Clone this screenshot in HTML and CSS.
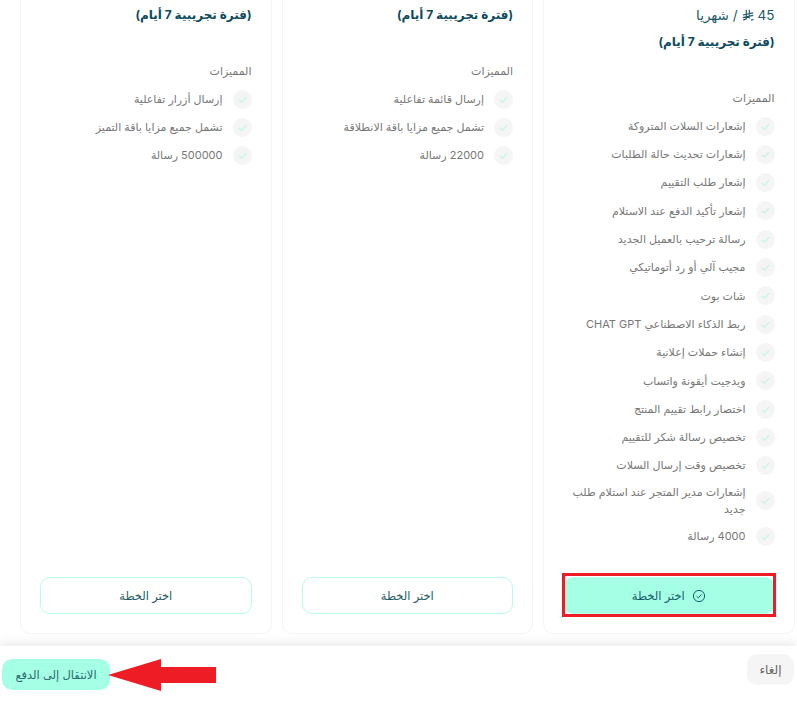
FILE: index.html
```html
<!DOCTYPE html>
<html lang="ar" dir="rtl">
<head>
<meta charset="utf-8">
<title>الخطط</title>
<link rel="stylesheet" href="styles.css">
</head>
<body>
<main class="plans">
  <section class="card">
    <div class="price">45 <svg class="riyal" viewBox="0 0 14 14"><path d="M5 1v10.5L1.5 13M8.5 1v10M1 7l12-2.5M1 10l12-2.5M10.5 13l3-.8" fill="none" stroke="currentColor" stroke-width="1.4"/></svg> / شهريا</div>
    <h2 class="trial">(فترة تجريبية 7 أيام)</h2>
    <h3 class="features-title">المميزات</h3>
    <ul class="features">
      <li><span class="tick"><svg viewBox="0 0 12 12"><path d="M2 6.5l2.8 2.6L10 3.5"/></svg></span><span>إشعارات السلات المتروكة</span></li>
      <li><span class="tick"><svg viewBox="0 0 12 12"><path d="M2 6.5l2.8 2.6L10 3.5"/></svg></span><span>إشعارات تحديث حالة الطلبات</span></li>
      <li><span class="tick"><svg viewBox="0 0 12 12"><path d="M2 6.5l2.8 2.6L10 3.5"/></svg></span><span>إشعار طلب التقييم</span></li>
      <li><span class="tick"><svg viewBox="0 0 12 12"><path d="M2 6.5l2.8 2.6L10 3.5"/></svg></span><span>إشعار تأكيد الدفع عند الاستلام</span></li>
      <li><span class="tick"><svg viewBox="0 0 12 12"><path d="M2 6.5l2.8 2.6L10 3.5"/></svg></span><span>رسالة ترحيب بالعميل الجديد</span></li>
      <li><span class="tick"><svg viewBox="0 0 12 12"><path d="M2 6.5l2.8 2.6L10 3.5"/></svg></span><span>مجيب آلي أو رد أتوماتيكي</span></li>
      <li><span class="tick"><svg viewBox="0 0 12 12"><path d="M2 6.5l2.8 2.6L10 3.5"/></svg></span><span>شات بوت</span></li>
      <li><span class="tick"><svg viewBox="0 0 12 12"><path d="M2 6.5l2.8 2.6L10 3.5"/></svg></span><span>ربط الذكاء الاصطناعي CHAT GPT</span></li>
      <li><span class="tick"><svg viewBox="0 0 12 12"><path d="M2 6.5l2.8 2.6L10 3.5"/></svg></span><span>إنشاء حملات إعلانية</span></li>
      <li><span class="tick"><svg viewBox="0 0 12 12"><path d="M2 6.5l2.8 2.6L10 3.5"/></svg></span><span>ويدجيت أيقونة واتساب</span></li>
      <li><span class="tick"><svg viewBox="0 0 12 12"><path d="M2 6.5l2.8 2.6L10 3.5"/></svg></span><span>اختصار رابط تقييم المنتج</span></li>
      <li><span class="tick"><svg viewBox="0 0 12 12"><path d="M2 6.5l2.8 2.6L10 3.5"/></svg></span><span>تخصيص رسالة شكر للتقييم</span></li>
      <li><span class="tick"><svg viewBox="0 0 12 12"><path d="M2 6.5l2.8 2.6L10 3.5"/></svg></span><span>تخصيص وقت إرسال السلات</span></li>
      <li><span class="tick"><svg viewBox="0 0 12 12"><path d="M2 6.5l2.8 2.6L10 3.5"/></svg></span><span>إشعارات مدير المتجر عند استلام طلب جديد</span></li>
      <li><span class="tick"><svg viewBox="0 0 12 12"><path d="M2 6.5l2.8 2.6L10 3.5"/></svg></span><span>4000 رسالة</span></li>
    </ul>
    <div class="choose-wrap selected-wrap">
      <button class="choose selected"><svg class="ok" viewBox="0 0 14 14"><circle cx="7" cy="7" r="5.6"/><path d="M4.6 7.2l1.7 1.6 3.2-3.4"/></svg>اختر الخطة</button>
    </div>
  </section>

  <section class="card">
    <h2 class="trial">(فترة تجريبية 7 أيام)</h2>
    <h3 class="features-title">المميزات</h3>
    <ul class="features">
      <li><span class="tick"><svg viewBox="0 0 12 12"><path d="M2 6.5l2.8 2.6L10 3.5"/></svg></span><span>إرسال قائمة تفاعلية</span></li>
      <li><span class="tick"><svg viewBox="0 0 12 12"><path d="M2 6.5l2.8 2.6L10 3.5"/></svg></span><span>تشمل جميع مزايا باقة الانطلاقة</span></li>
      <li><span class="tick"><svg viewBox="0 0 12 12"><path d="M2 6.5l2.8 2.6L10 3.5"/></svg></span><span>22000 رسالة</span></li>
    </ul>
    <div class="choose-wrap"><button class="choose">اختر الخطة</button></div>
  </section>

  <section class="card">
    <h2 class="trial">(فترة تجريبية 7 أيام)</h2>
    <h3 class="features-title">المميزات</h3>
    <ul class="features">
      <li><span class="tick"><svg viewBox="0 0 12 12"><path d="M2 6.5l2.8 2.6L10 3.5"/></svg></span><span>إرسال أزرار تفاعلية</span></li>
      <li><span class="tick"><svg viewBox="0 0 12 12"><path d="M2 6.5l2.8 2.6L10 3.5"/></svg></span><span>تشمل جميع مزايا باقة التميز</span></li>
      <li><span class="tick"><svg viewBox="0 0 12 12"><path d="M2 6.5l2.8 2.6L10 3.5"/></svg></span><span>500000 رسالة</span></li>
    </ul>
    <div class="choose-wrap"><button class="choose">اختر الخطة</button></div>
  </section>
</main>

<footer class="bar">
  <button class="cancel">إلغاء</button>
  <button class="go">الانتقال إلى الدفع</button>
  <svg class="arrow" viewBox="0 0 108 32"><path d="M0 16L53 0V8H108V24H53V32Z"/></svg>
</footer>
</body>
</html>
```
FILE: styles.css
```css
* { box-sizing: border-box; }
html, body { margin: 0; height: 701px; overflow: hidden; background: #fff; }
body {
  font-family: "Inter", "DejaVu Sans", sans-serif;
  color: #777;
  display: flex;
  flex-direction: column;
}
.plans {
  height: 646px;
  flex: none;
  display: flex;
  gap: 10px;
  padding: 0 2.5px 12px 0;
  align-items: flex-end;
  overflow: hidden;
  background: #fff;
}
.card {
  flex: none;
  width: 251.5px;
  height: 700px;
  border: 1px solid #f4f4f4;
  border-radius: 10px;
  padding: 0 19px 19px;
  display: flex;
  flex-direction: column;
  background: #fff;
}
.price {
  margin-top: 66px;
  height: 28px;
  font-size: 13.5px;
  line-height: 28px;
  color: #22586a;
  display: flex;
  gap: 4px;
  align-items: center;
}
.riyal { width: 12px; height: 12px; }
.trial {
  margin: 0;
  font-size: 12px;
  line-height: 26px;
  font-weight: 700;
  color: #0b4a5f;
}
.card:not(:first-child) .trial { margin-top: 67px; }
.features-title {
  margin: 34px 0 0;
  font-size: 11px;
  line-height: 18px;
  font-weight: 400;
  color: #777;
}
.features {
  list-style: none;
  margin: 9.6px 0 0;
  padding: 0;
  display: flex;
  flex-direction: column;
  gap: 9.3px;
  flex: 1;
}
.features li {
  display: flex;
  align-items: center;
  gap: 10px;
  font-size: 11px;
  line-height: 16.5px;
  color: #777;
}
.tick {
  flex: none;
  width: 19px;
  height: 19px;
  border-radius: 50%;
  background: #f5f5f5;
  display: flex;
  align-items: center;
  justify-content: center;
}
.tick svg { width: 11px; height: 11px; fill: none; stroke: #b5f8e2; stroke-width: 1.2; }
.choose-wrap { flex: none; position: relative; }
.choose {
  width: 100%;
  height: 37px;
  border: 1px solid #b8fbe6;
  border-radius: 10px;
  background: #fff;
  font: inherit;
  font-size: 11.5px;
  font-weight: 400;
  color: #1f5c66;
  display: flex;
  align-items: center;
  justify-content: center;
  gap: 7px;
}
.choose.selected { background: #a5ffe4; color: #17606a; }
.selected-wrap::after {
  content: "";
  position: absolute;
  inset: -4px -1px -3px -1px;
  border: 3px solid #ee1c25;
  pointer-events: none;
}
.ok { width: 14px; height: 14px; fill: none; stroke: #17606a; stroke-width: 1; }
.bar {
  flex: 1;
  position: relative;
  background: #fff;
  box-shadow: 0 -3px 10px rgba(0,0,0,.09);
  display: flex;
  justify-content: space-between;
  align-items: flex-start;
  padding: 8px 3px 0 2px;
}
.cancel {
  width: 47px;
  height: 31px;
  flex: none;
  border: 0;
  border-radius: 10px;
  background: #f5f5f5;
  font: inherit;
  font-size: 12px;
  color: #666;
}
.go {
  margin-top: 5px;
  width: 108px;
  height: 31px;
  flex: none;
  border: 0;
  border-radius: 10px;
  background: #a5ffe4;
  font: inherit;
  font-size: 11.5px;
  color: #2b6a70;
}
.arrow {
  position: absolute;
  left: 108px;
  top: 13px;
  width: 108px;
  height: 32px;
  fill: #ee1c25;
}
```
